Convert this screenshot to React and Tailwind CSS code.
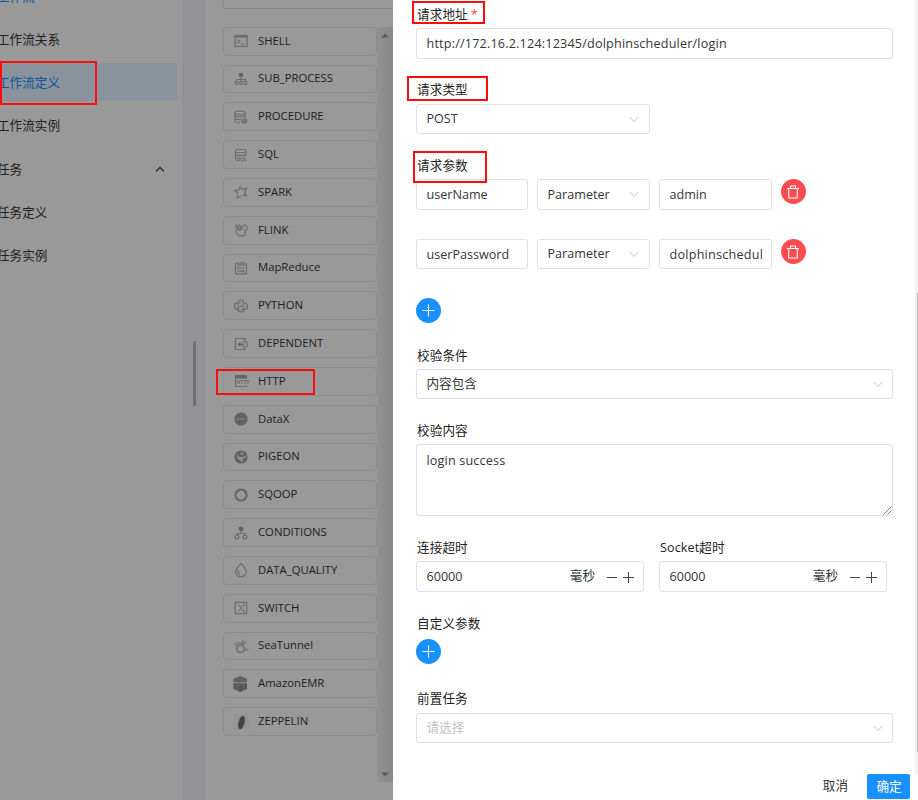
import React from "react";

const menu = [
  { label: "工作流", parent: true, active: true },
  { label: "工作流关系" },
  { label: "工作流定义", selected: true },
  { label: "工作流实例" },
  { label: "任务", arrow: true },
  { label: "任务定义" },
  { label: "任务实例" },
];

function Icon({ children }) {
  return (
    <svg width="16" height="16" viewBox="0 0 16 16" fill="none" stroke="#6e6e6e" strokeWidth="1.200" className="shrink-0">
      {children}
    </svg>
  );
}

const solid = { fill: "#626262", stroke: "none" };
const tiny = { fill: "#6a6a6a", stroke: "none", fontFamily: "Liberation Sans, sans-serif", fontWeight: 700 };

const tasks = [
  ["SHELL", <><rect x="2" y="2.500" width="12" height="11" /><path d="M1.500 3.500h13" strokeWidth="2.200" /><path d="M4.200 6.500l2.600 2-2.600 2M8 11h3.500" /></>],
  ["SUB_PROCESS", <><rect x="6" y="2" width="4" height="3.600" {...solid} /><path d="M8 5.500v5M3.500 10.500V8.500h9v2" /><rect x="2.200" y="10.500" width="2.600" height="3" rx=".8" /><rect x="6.700" y="10.500" width="2.600" height="3" rx=".8" /><rect x="11.200" y="10.500" width="2.600" height="3" rx=".8" /></>],
  ["PROCEDURE", <><ellipse cx="7" cy="3.800" rx="5" ry="1.800" /><path d="M2 4v8c0 1 2 1.800 5 1.800M12 4v4.500M2 6.500c1 1.600 8.500 1.800 10 0M2 9.300c1 1.400 4 1.600 6 1.300" /><circle cx="11.300" cy="11.800" r="2.200" strokeWidth="1.400" /><path d="M9.700 13.300l3.200-3" /></>],
  ["SQL", <><rect x="2.500" y="2.500" width="10.500" height="3" rx="1.500" /><path d="M2.500 4v7.500c0 1 .5 1.500 1.500 1.800M13 4v5M2.500 7.500c1.500 1.300 9 1.300 10.500 0" /><text x="4" y="14" fontSize="5" {...tiny}>SQL</text></>],
  ["SPARK", <><path d="M4.500 10.500L4.200 14l3.600-1.800M7 2.800L5.800 6 2 6.600l3 2.700M7.200 2.500l2 3 4.500-1.200-2 3.700 1.800 3.700-3.700-.7" strokeWidth="1.300" /></>],
  ["FLINK", <><path d="M2.500 3l1.500 3-1 3.500 2.500 4.200h5.500l1.500-2.500-1-2.500 2.500-1V4.500l-2-1.500-2.500 1-.5 3-3 1.500L5 5.500 6.500 3l1.500 2.300L6.200 7.800M3 3l2 .2" /></>],
  ["MapReduce", <><path d="M4 3.500H2.500v10.300h11V3.500H12M4.500 8h7M4.500 11.200h7M5 6.700v2.600M10 10v2.600" /><text x="4.300" y="5.800" fontSize="5" {...tiny}>MR</text></>],
  ["PYTHON", <><path d="M5 7V3.800C5 1.500 10.500 1.500 10.500 3.800v3c0 1-1 1.500-2 1.500h-2c-1 0-1.800.7-1.800 2v1.200H3.600C.9 11.500.9 5 3.600 5H8M11 9v3.200c0 2.300-5.500 2.300-5.500 0V10M11.200 5h1.200c2.700 0 2.700 6.500 0 6.500H8" /></>],
  ["DEPENDENT", <><path d="M12 5V2.500H2.500v11H12V12" /><path d="M9 7.300L10.500 5.800h2.800c1.500 1.500 1.500 3.500 0 5h-2.800L9 9.300M6 8.300h5.500" /><path d="M4.300 8.300l3.200-2.600v5.200z" {...solid} /></>],
  ["HTTP", <><path d="M1.800 2h12.200v3.500H1.800z" {...solid} /><path d="M2.500 5v8.500h11V12" /><text x="3.600" y="11" fontSize="5" {...tiny}>HTTP</text></>],
  ["DataX", <><circle cx="8" cy="8" r="6.600" {...solid} /><path d="M3.500 8h9" stroke="#828282" strokeWidth="1.500" strokeDasharray="1.300 .4" /></>],
  ["PIGEON", <><circle cx="8" cy="8" r="6.600" {...solid} /><path d="M4.300 4l1 3 2.700 1.200 3-.5 1.200-2L13 8l-2.500 1L9.500 11l1 1.500-2.500.3-2.800-3-.9-2z" fill="#929292" stroke="none" /><circle cx="9" cy="4.500" r="1.200" fill="#929292" stroke="none" /></>],
  ["SQOOP", <><circle cx="8" cy="8" r="5.600" stroke="#666" strokeWidth="2" /><path d="M4 5.500l2.500-2M12.500 6.500l-2-3M3.500 10.500l2 2M12.500 10.500l-2 2" /></>],
  ["CONDITIONS", <><circle cx="8" cy="4" r="2.400" {...solid} /><path d="M8 5v3.500M4 10.200V8.500h8v1.700" /><circle cx="4" cy="12" r="1.900" strokeWidth="1.400" /><circle cx="12" cy="12" r="1.900" strokeWidth="1.400" /></>],
  ["DATA_QUALITY", <><path d="M8 1.500C5 4.500 2.600 7 2.600 9.800a5.400 4.900 0 0 0 10.800 0C13.400 7 11 4.500 8 1.500z" /><path d="M5.300 8c-.6 2 .2 3.500 1.600 4.200" /></>],
  ["SWITCH", <><rect x="2.300" y="2.300" width="11.400" height="11.400" /><path d="M4.500 5H6l4 6h1.700M4.500 11H6l4-6h1.700M10.500 3.700L12 5l-1.500 1.300M10.500 9.700L12 11l-1.500 1.300" strokeWidth=".9" /></>],
  ["SeaTunnel", <><circle cx="7.500" cy="10.800" r="3.800" strokeWidth="1.500" /><path d="M3 8L2 5.500l3.500 1M4.500 3.500l3 2.500 3-4-1 4 3.500-1.500-3 2.500M11 10l3.500 1.500-3 1" stroke="#777" /></>],
  ["AmazonEMR", <><path d="M7.500 0l6.500 2.800V6L7.500 6.700.5 6V2.800z" {...solid} /><path d="M.5 7l7 .6L14 7v6l-6.500 3-7-3z" fill="#555" stroke="none" /><path d="M3 7.500v6M5.300 7.500v7M10.500 7.500v7" stroke="#777" strokeWidth=".7" /></>],
  ["ZEPPELIN", <><rect x="0" y="0" width="16" height="16" fill="#949494" stroke="none" /><ellipse cx="8.500" cy="8.500" rx="3" ry="7" transform="rotate(14 8.500 8.500)" fill="#444" stroke="none" /></>],
];

function Chevron() {
  return (
    <svg width="10" height="7" viewBox="0 0 10 7" fill="none" stroke="#c2c2c2" className="shrink-0">
      <path d="M.8 1L5 5.500 9.200 1" />
    </svg>
  );
}

const base = "flex items-center rounded-[3px] border border-[#e0e0e6] bg-white pl-[9.500px] text-[#333639]";

function Field({ className, children, arrow, muted }) {
  return (
    <div className={`${base} ${className}`}>
      <span className={`min-w-0 flex-1 overflow-hidden whitespace-nowrap ${muted ? "text-[#c2c2c2]" : ""}`}>{children}</span>
      {arrow && <Chevron />}
    </div>
  );
}

function Label({ children, className }) {
  return <div className={`flex h-[20px] shrink-0 items-center pl-px pt-[2px] tracking-[0.1px] text-[#1f2225] ${className}`}>{children}</div>;
}

function AddButton() {
  return (
    <button className="flex size-[25px] shrink-0 items-center justify-center rounded-full bg-[#1890ff]">
      <svg width="13" height="13" viewBox="0 0 13 13" stroke="#fff" strokeWidth="1.100"><path d="M.5 6.500h12M6.500.5v12" /></svg>
    </button>
  );
}

function DeleteButton() {
  return (
    <button className="ml-[9px] flex size-[25px] shrink-0 items-center justify-center rounded-full bg-[#ff4d4f] pr-px">
      <svg width="12" height="14" viewBox="0 0 12 14" fill="none" stroke="#fff" strokeWidth="1.100">
        <path d="M0 3.500h12M1.700 3.500v9.500h8.600V3.500M3.500 3.500V1h5v2.500" />
      </svg>
    </button>
  );
}

function NumberField() {
  return (
    <div className={`${base} h-[31px] w-[228px] pr-[8px]`}>
      <span className="flex-1">60000</span>
      <span className="relative -top-px">毫秒</span>
      <svg width="28" height="12" viewBox="0 0 28 12" stroke="#444" className="ml-[12px]">
        <path d="M0 6.500h10M16 6.500h11M21.500 1v11" />
      </svg>
    </div>
  );
}

function Mark({ className }) {
  return <div className={`pointer-events-none absolute border-2 border-[#fb0d0d] ${className}`} />;
}

export default function App() {
  return (
    <div className="relative flex h-[800px] w-[918px] overflow-hidden bg-[#999] font-['Open_Sans','Noto_Sans_CJK_SC',sans-serif] text-[12.600px] leading-[20px]">
      <aside className="w-[184px] shrink-0 overflow-hidden border-r border-[#8f8f93]">
        <div className="-mt-[23px] flex flex-col">
          {menu.map((m) => (
            <div
              key={m.label}
              className={`mb-[5.400px] flex h-[37.800px] w-[177px] shrink-0 items-center justify-between rounded-r-[3px] pr-[12px] pt-[2px] ${m.selected ? "bg-[#8a929b]" : ""} ${m.selected || m.active ? "text-[#0e5699]" : "text-[#1f2022]"}`}
            >
              <span className="-ml-[3px] whitespace-nowrap">{m.label}</span>
              {m.arrow && (
                <svg width="10" height="7" viewBox="0 0 10 7" fill="none" stroke="#2b2b2b" strokeWidth="1.300"><path d="M1 5.500L5 1.500l4 4" /></svg>
              )}
            </div>
          ))}
        </div>
      </aside>

      <div className="w-[21px] shrink-0 border-r border-[#8d8d92] bg-[#939397] pl-[9px] pt-[341px]">
        <div className="h-[65px] w-[3px] rounded-full bg-[#6f6f72]" />
      </div>

      <section className="flex w-[188px] shrink-0 flex-col pl-[18px]">
        <div className="h-[9px] shrink-0 rounded-bl-[3px] border-b border-l border-[#8b8b8f]" />
        <div className="mt-[17.800px] flex h-[755px]">
          <div className="w-[154px] shrink-0">
            {tasks.map(([name, icon]) => (
              <div key={name} className="mb-[9px] flex h-[28.800px] items-center rounded-[3px] border border-[#8e8e91] pl-[9px] text-[#1c1d1f]">
                <Icon>{icon}</Icon>
                <span className="ml-[9px] pb-[1.200px] text-[11.300px]">{name}</span>
              </div>
            ))}
          </div>
          <div className="flex flex-1 flex-col items-center justify-between bg-linear-to-r from-[#919191] to-[#888] pb-[5px] pt-[6px]">
            <svg width="8" height="5" viewBox="0 0 8 5"><path d="M4 .5L8 4.500H0z" fill="#5c5c5c" /></svg>
            <svg width="8" height="5" viewBox="0 0 8 5"><path d="M4 4.500L8 .5H0z" fill="#5c5c5c" /></svg>
          </div>
        </div>
      </section>

      <main className="flex min-w-0 flex-1 flex-col bg-white">
        <div className="flex h-[774px] shrink-0">
          <div className="flex w-[500px] shrink-0 flex-col pl-[23px]">
            <Label className="mt-[4px]">请求地址<span className="ml-[3px] text-[#f0464a]">*</span></Label>
            <Field className="mt-[4px] h-[31px] shrink-0 tracking-[0.190px]">http://172.16.2.124:12345/dolphinscheduler/login</Field>

            <Label className="mt-[20px]">请求类型</Label>
            <Field className="mt-[5px] h-[30px] w-[234px] shrink-0 pr-[10px]" arrow>POST</Field>

            <Label className="mt-[21px]">请求参数</Label>
            <div className="mt-[4px] flex h-[31px] shrink-0 items-start">
              <Field className="h-[31px] w-[112px] pr-[9px]">userName</Field>
              <Field className="ml-[9px] h-[31px] w-[113px] pr-[10px]" arrow>Parameter</Field>
              <Field className="ml-[9px] h-[31px] w-[113px] pr-[9px]">admin</Field>
              <DeleteButton />
            </div>
            <div className="mt-[29px] flex h-[30px] shrink-0 items-start">
              <Field className="h-[30px] w-[112px] pr-[9px] pt-px">userPassword</Field>
              <Field className="ml-[9px] h-[30px] w-[113px] pr-[10px]" arrow>Parameter</Field>
              <Field className="ml-[9px] h-[30px] w-[113px] pr-[9px] pt-px tracking-[0.240px]">dolphinscheduler</Field>
              <DeleteButton />
            </div>
            <div className="mt-[29px] flex h-[25px]"><AddButton /></div>

            <Label className="mt-[22px]">校验条件</Label>
            <Field className="mt-[4px] h-[30px] shrink-0 pr-[9px]" arrow>内容包含</Field>

            <Label className="mt-[21px]">校验内容</Label>
            <div className="mt-[4px] flex h-[72px] shrink-0 items-start justify-between rounded-[3px] border border-[#e0e0e6] pl-[9.500px] pt-[6px] text-[#333639]">
              <span className="tracking-[0.170px]">login success</span>
              <svg width="9" height="9" viewBox="0 0 9 9" stroke="#555" strokeWidth=".8" className="self-end"><path d="M.5 8.500l8-8M4.500 8.500l4-4" /></svg>
            </div>

            <div className="mt-[21px] flex gap-[15px]">
              <div className="flex flex-col gap-[4px]">
                <Label>连接超时</Label>
                <NumberField />
              </div>
              <div className="flex flex-col gap-[4px]">
                <Label>Socket超时</Label>
                <NumberField />
              </div>
            </div>

            <Label className="mt-[21px]">自定义参数</Label>
            <div className="mt-[6px] flex h-[26px]"><AddButton /></div>

            <Label className="mt-[23px]">前置任务</Label>
            <Field className="mt-[5px] h-[30px] shrink-0 pr-[9px]" arrow muted>请选择</Field>
          </div>
          <div className="ml-auto w-[3px] bg-[#f1f1f1] pl-[2px] pt-[293px]">
            <div className="h-[459px] bg-[#b8b8b8]" />
          </div>
        </div>
        <footer className="flex h-[25px] items-center justify-end gap-[19px] pr-[8px]">
          <button className="pb-px text-[#333639]">取消</button>
          <button className="h-[25px] w-[43px] rounded-[2px] bg-[#1890ff] pl-px text-white">确定</button>
        </footer>
      </main>

      <Mark className="left-0 top-[61px] h-[44px] w-[97px]" />
      <Mark className="left-[216px] top-[369px] h-[26px] w-[99px]" />
      <Mark className="left-[412px] top-px h-[23px] w-[73px]" />
      <Mark className="left-[407px] top-[76px] h-[25px] w-[81px]" />
      <Mark className="left-[413px] top-[151px] h-[32px] w-[74px]" />
    </div>
  );
}
